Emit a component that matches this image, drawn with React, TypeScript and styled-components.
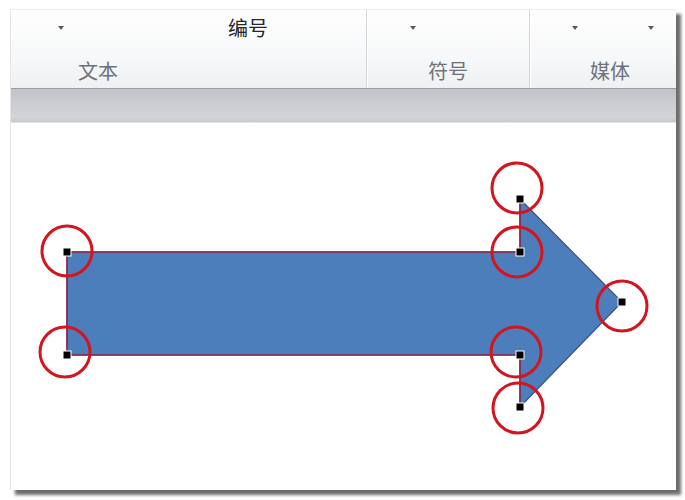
import React from "react";
import styled, { createGlobalStyle } from "styled-components";

const GlobalStyle = createGlobalStyle`
  html, body {
    margin: 0;
    padding: 0;
    background: #ffffff;
    font-family: "Noto Sans CJK SC", "Liberation Sans", sans-serif;
  }
`;

interface Group {
  width: number;
  carets: number[];
  title?: { text: string; left: number };
  label: { text: string; left: number };
}

const groups: Group[] = [
  { width: 356, carets: [47], title: { text: "编号", left: 164 }, label: { text: "文本", left: 67 } },
  { width: 163, carets: [43], label: { text: "符号", left: 61 } },
  { width: 146, carets: [42, 70], label: { text: "媒体", left: 60 } },
];

// handles of the shape, in page coordinates
const handles = [
  [67, 252],
  [67, 355],
  [520, 199],
  [520, 252],
  [520, 355],
  [520, 407],
  [622, 302],
];

const rings = [
  [67, 251],
  [65, 352],
  [517, 188],
  [517, 252],
  [622, 306],
  [516, 352],
  [518, 408],
];

export default function App() {
  return (
    <>
      <GlobalStyle />
      <Page>
        <Frame>
          <Ribbon>
            {groups.map((g, i) => (
              <RibbonGroup key={i} $width={g.width} $last={i === groups.length - 1}>
                <TopRow>
                  {g.carets.map((c, j) => (
                    <Caret key={j} $left={c} />
                  ))}
                  {g.title && <Title $left={g.title.left}>{g.title.text}</Title>}
                </TopRow>
                <GroupLabel $left={g.label.left}>{g.label.text}</GroupLabel>
              </RibbonGroup>
            ))}
          </Ribbon>
          <GreyBar />
          <Canvas>
            <svg width="665" height="367" viewBox="11 123 665 367">
              <polygon
                points="67,252 520,252 520,199 622,302 520,407 520,355 67,355"
                fill="#4b7ebb"
                stroke="#3f4f86"
                strokeWidth="1.2"
                strokeLinejoin="miter"
              />
              <polyline
                points="520,199 520,252 67,252 67,355 520,355 520,407"
                fill="none"
                stroke="#8a2a4c"
                strokeWidth="1.6"
              />
              {rings.map(([x, y], i) => (
                <circle key={i} cx={x} cy={y} r="25" fill="none" stroke="#d2151e" strokeWidth="3" />
              ))}
              {handles.map(([x, y], i) => (
                <rect
                  key={i}
                  x={x - 4}
                  y={y - 4}
                  width="8"
                  height="8"
                  fill="#000"
                  stroke="#fff"
                  strokeWidth="1"
                />
              ))}
            </svg>
          </Canvas>
        </Frame>
      </Page>
    </>
  );
}

const Page = styled.div`
  width: 685px;
  height: 500px;
  padding: 9px 0 0 10px;
  box-sizing: border-box;
`;

const Frame = styled.div`
  width: 665px;
  height: 480px;
  display: flex;
  flex-direction: column;
  background: #ffffff;
  border-left: 1px solid #e4e5e7;
  border-top: 1px solid #eceef0;
  box-shadow: 5px 5px 3px rgba(60, 60, 60, 0.75);
  overflow: hidden;
`;

const Ribbon = styled.div`
  height: 79px;
  display: flex;
  background: linear-gradient(#fefefe 0%, #f7f8f9 60%, #eef0f2 100%);
  border-bottom: 1px solid #9a9ea3;
`;

const RibbonGroup = styled.div<{ $width: number; $last?: boolean }>`
  box-sizing: border-box;
  width: ${(p) => p.$width}px;
  flex: ${(p) => (p.$last ? 1 : "none")};
  display: flex;
  flex-direction: column;
  border-right: ${(p) => (p.$last ? "none" : "1px solid #d3d6da")};
  box-shadow: ${(p) => (p.$last ? "none" : "1px 0 0 #ffffff")};
`;

const TopRow = styled.div`
  height: 36px;
  display: flex;
  align-items: center;
`;

const Caret = styled.span<{ $left: number }>`
  margin-left: ${(p) => p.$left}px;
  width: 0;
  height: 0;
  border-left: 3.5px solid transparent;
  border-right: 3.5px solid transparent;
  border-top: 4px solid #555a60;
`;

const Title = styled.span<{ $left: number }>`
  margin-left: ${(p) => p.$left}px;
  font-size: 20px;
  line-height: 24px;
  color: #23262a;
`;

const GroupLabel = styled.div<{ $left: number }>`
  padding: 13px 0 0 ${(p) => p.$left}px;
  font-size: 20px;
  line-height: 24px;
  color: #6e7278;
`;

const GreyBar = styled.div`
  height: 33px;
  background: linear-gradient(#bfc2c6 0%, #caccd0 40%, #d2d4d7 85%, #c6c9cd 100%);
  border-bottom: 1px solid #e6e7e9;
`;

const Canvas = styled.div`
  flex: 1;
  background: #ffffff;
  svg {
    display: block;
  }
`;
